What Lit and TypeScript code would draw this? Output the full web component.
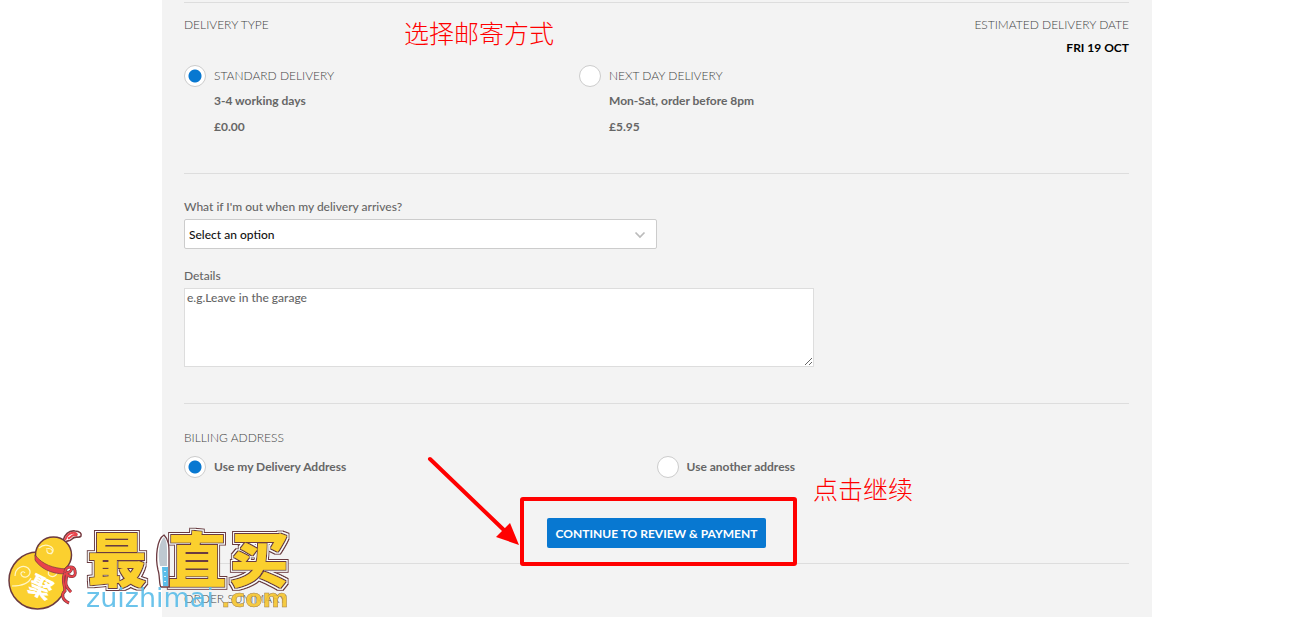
import { LitElement, html, css, svg } from "lit";
import { customElement, state } from "lit/decorators.js";

@customElement("brand-mark")
class BrandMark extends LitElement {
  static styles = css`
    :host { display: block; }
    svg { display: block; overflow: visible; }
    .glyph { font: 900 59px "Noto Sans CJK SC", sans-serif; text-anchor: middle; fill: #fbd02f; }
    .site { font: 27px "DejaVu Sans", sans-serif; fill: #5bbde9; opacity: 0.9; }
    .tld { font: 700 25px "DejaVu Sans", sans-serif; fill: #f6c62e; stroke: #9a7440; stroke-width: 0.5px; opacity: 0.9; }
    .seal { font: 900 24px "Noto Sans CJK SC", sans-serif; fill: #fff; text-anchor: middle; }
  `;

  render() {
    const chars: [string, number][] = [["最", 117], ["直", 197], ["买", 259]];
    return html`<svg width="300" height="97" viewBox="0 0 300 97" role="img" aria-label="最值买 zuizhimai.com">
      <defs>
        <filter id="outline" x="70" y="0" width="230" height="80" filterUnits="userSpaceOnUse">
          <feMorphology in="SourceAlpha" operator="dilate" radius="1" result="a"/>
          <feMorphology in="SourceAlpha" operator="dilate" radius="2" result="b"/>
          <feMorphology in="SourceAlpha" operator="dilate" radius="3" result="c"/>
          <feFlood flood-color="#6b3a40" result="brown"/>
          <feFlood flood-color="#fff" result="white"/>
          <feComposite in="brown" in2="c" operator="in" result="outer"/>
          <feComposite in="white" in2="b" operator="in" result="middle"/>
          <feComposite in="brown" in2="a" operator="in" result="inner"/>
          <feMerge><feMergeNode in="outer"/><feMergeNode in="middle"/><feMergeNode in="inner"/><feMergeNode in="SourceGraphic"/></feMerge>
        </filter>
      </defs>
      <path d="M63 21c1-6 6-11 12-10 5 0 7 3 6 5-2 3-6-1-9 3-3 3-5 1-6 3z" fill="#fff" stroke="#763b40" stroke-width="1.6"/>
      <path d="M65 20c2-5 5-8 10-7 3 1 2 3-1 2-3 0-3 4-6 3" fill="none" stroke="#e9434b" stroke-width="2"/>
      <circle cx="37.500" cy="60.500" r="28.500" fill="#fbd02f" stroke="#6b3a40" stroke-width="1.500"/>
      <circle cx="53.500" cy="35" r="18" fill="#fbd02f" stroke="#6b3a40" stroke-width="1.500"/>
      <path d="M38 41l24 13-20 4-12-13z" fill="#fbd02f"/>
      <path d="M39 28c7-6 15-1 14 3-1 4-7 3-6-1M15 56c0-8 8-12 13-8 5 5-1 12-6 8-3-3 1-6 3-3M12 66c7 0 16-1 19-8M49 51c-3 5 4 7 7 4 3-4-2-6-3-3M46 29c6-2 8 3 5 5" fill="none" stroke="#fff5c5" stroke-width="1.200"/>
      <path d="M35 35c8 10 18 13 31 14l-1 5c-14 0-25-6-30-14z" fill="#e9434b" stroke="#763b40" stroke-width="0.700"/>
      <path d="M65 52c0-6 10-7 10-1 2 7-6 7-9 2 3 7-5 9 5 19M65 53c-4 6 0 13 0 18-4 3-3 9 4 12M72 48c-1 4-3 5-6 4" fill="none" stroke="#763b40" stroke-width="3"/>
      <path d="M65 52c0-6 10-7 10-1 2 7-6 7-9 2 3 7-5 9 5 19M65 53c-4 6 0 13 0 18-4 3-3 9 4 12M72 48c-1 4-3 5-6 4" fill="none" stroke="#e9434b" stroke-width="1.800"/>
      <text class="seal" x="40" y="76" transform="rotate(26 40 69)">聚</text>
      <g filter="url(#outline)">
        ${chars.map(([char, x]) => svg`<text class="glyph" x=${x} y="62">${char}</text>`)}
      </g>
      <path d="M161 67c-2-1-1-12-3-17-3-13-1-31 6-35 5 5 5 11 5 19v33z" fill="#fff" stroke="#6b3a40" stroke-width="1.300"/>
      <path d="M160 46c-3-14 0-25 4-29 3 4 3 9 3 16v13z" fill="#bec8d0"/>
      <path d="M162 47h6v19h-5z" fill="#5bbde9"/>
      <path d="M165 51v1m0 4v1m0 4v1" stroke="#fff" stroke-width="1.500"/>
      <text class="site" x="86" y="87">zuizhimai</text>
      <text class="tld" x="221" y="87">.com</text>
    </svg>`;
  }
}

@customElement("app-root")
class AppRoot extends LitElement {
  @state() private delivery = "standard";
  @state() private billing = "same";

  static styles = css`
    :host {
      display: block;
      box-sizing: border-box;
      min-height: 100vh;
      padding-left: 11px;
      background: #fff;
      color: #666;
      font: 700 12px/23px Lato, sans-serif;
      position: relative;
    }
    * { box-sizing: border-box; }
    .panel {
      position: relative;
      max-width: 990px;
      min-height: 100vh;
      margin: 0 auto;
      padding: 2px 23px 0 22px;
      background: #f3f3f3;
    }
    .section { border-top: 1px solid #ddd; }
    .delivery { padding: 10px 0 33px; }
    .instructions { padding: 20px 0 36px; }
    .billing { padding: 22px 0 15px; }
    .summary { padding: 23px 0 7px; }
    .head { display: flex; justify-content: space-between; }
    .title { margin: 0; font-size: 12px; font-weight: 300; color: #444; }
    .estimate { text-align: right; }
    .date { color: #000; margin: 0; }
    .choices { display: grid; margin-top: 6px; }
    .wide { grid-template-columns: 395fr 550fr; }
    .even { grid-template-columns: 1fr 1fr; margin-top: 7px; }
    .choice { display: grid; grid-template-columns: 22px 1fr; column-gap: 8px; line-height: 26px; justify-self: start; }
    .choice .first { line-height: 22px; }
    .choice .name { font-weight: 300; color: #444; margin-bottom: 1px; }
    .choice span { grid-column: 2; }
    .choice input {
      appearance: none;
      width: 22px;
      height: 22px;
      margin: 0;
      border: 1px solid #ccc;
      border-radius: 50%;
      background: #fff;
    }
    .choice input:checked { background: radial-gradient(circle, #0878d1 6px, #fff 7px); }
    .label { display: block; line-height: 25px; width: fit-content; font-weight: 500; }
    .picker { position: relative; width: 50%; margin-bottom: 14px; }
    .picker select {
      display: block;
      appearance: none;
      width: 100%;
      height: 30px;
      padding: 0 4px;
      border: 1px solid #ccc;
      border-radius: 2px;
      background: #fff;
      color: #111;
      font: inherit;
      font-weight: 500;
    }
    .chevron { position: absolute; right: 11px; top: 12px; pointer-events: none; }
    .details {
      display: block;
      width: 66.7%;
      height: 79px;
      padding: 0 2px;
      border: 1px solid #ddd;
      background: #fff;
      font: inherit;
      font-weight: 500;
      line-height: 18px;
      resize: both;
    }
    .details::placeholder { color: #666; }
    .actions { display: flex; justify-content: center; margin-top: 40px; }
    .continue {
      height: 30px;
      padding: 0 9px;
      border: 0;
      border-radius: 2px;
      background: #0878d1;
      color: #fff;
      font: inherit;
    }
    .note {
      position: absolute;
      color: #f00;
      font: 300 25px/30px "Noto Sans CJK SC", sans-serif;
      white-space: nowrap;
    }
    .note-delivery { left: 242px; top: 17px; }
    .note-continue { left: 651px; top: 473px; }
    .marks { position: absolute; left: 0; top: 0; pointer-events: none; }
    .brand { position: absolute; left: 0; top: 520px; pointer-events: none; }
  `;

  private option(group: "delivery" | "billing", value: string, lines: string[], plain = false) {
    return html`<label class="choice">
      <input type="radio" name=${group} .checked=${this[group] === value} @change=${() => (this[group] = value)} />
      ${lines.map((line, i) => html`<span class=${i ? "" : plain ? "first" : "first name"}>${line}</span>`)}
    </label>`;
  }

  render() {
    return html`
      <main class="panel">
        <section class="section delivery">
          <div class="head">
            <h2 class="title">DELIVERY TYPE</h2>
            <div class="estimate">
              <h2 class="title">ESTIMATED DELIVERY DATE</h2>
              <p class="date">FRI 19 OCT</p>
            </div>
          </div>
          <div class="choices wide">
            ${this.option("delivery", "standard", ["STANDARD DELIVERY", "3-4 working days", "£0.00"])}
            ${this.option("delivery", "nextday", ["NEXT DAY DELIVERY", "Mon-Sat, order before 8pm", "£5.95"])}
          </div>
        </section>
        <section class="section instructions">
          <label class="label" for="absence">What if I'm out when my delivery arrives?</label>
          <div class="picker">
            <select id="absence"><option>Select an option</option></select>
            <svg class="chevron" width="12" height="8" viewBox="0 0 12 8"><path d="M1.500 1.500L6 6l4.500-4.500" fill="none" stroke="#bbb" stroke-width="1.700"/></svg>
          </div>
          <label class="label" for="details">Details</label>
          <textarea class="details" id="details" placeholder="e.g.Leave in the garage"></textarea>
        </section>
        <section class="section billing">
          <h2 class="title">BILLING ADDRESS</h2>
          <div class="choices even">
            ${this.option("billing", "same", ["Use my Delivery Address"], true)}
            ${this.option("billing", "other", ["Use another address"], true)}
          </div>
          <div class="actions"><button class="continue" type="button">CONTINUE TO REVIEW &amp; PAYMENT</button></div>
        </section>
        <section class="section summary"><h2 class="title">ORDER SUMMARY</h2></section>
        <svg class="marks" width="990" height="617" viewBox="0 0 990 617" aria-hidden="true">
          <rect x="360" y="499" width="273" height="65" rx="1" fill="none" stroke="#f00" stroke-width="4"/>
          <path d="M268 459L344 532" stroke="#f00" stroke-width="4" stroke-linecap="round"/>
          <path d="M357 545L334 537L348 523z" fill="#f00"/>
        </svg>
        <span class="note note-delivery">选择邮寄方式</span>
        <span class="note note-continue">点击继续</span>
      </main>
      <brand-mark class="brand"></brand-mark>
    `;
  }
}
